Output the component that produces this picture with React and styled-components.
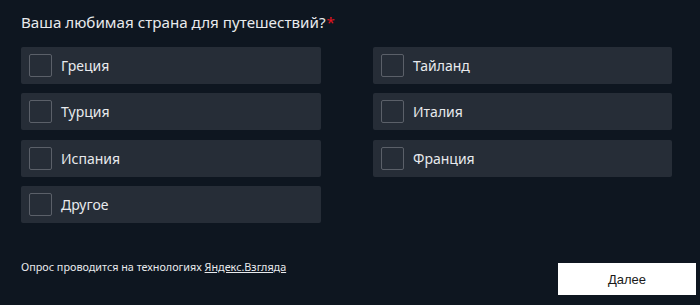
import styled, { createGlobalStyle } from "styled-components";

const Global = createGlobalStyle`
  html, body {
    margin: 0;
    background: #0e1620;
  }
  body {
    font-family: "Noto Sans", "Open Sans", sans-serif;
  }
`;

const Page = styled.div`
  width: 700px;
  height: 305px;
  box-sizing: border-box;
  padding: 11px 4px 10px 21px;
  display: flex;
  flex-direction: column;
  color: #e8eaed;
`;

const Question = styled.div`
  font-size: 15.2px;
  line-height: 22px;
  margin-bottom: 14px;
`;

const Required = styled.span`
  color: #e0141e;
  margin-left: 1px;
`;

const Options = styled.div`
  display: grid;
  grid-template-columns: 300px 299px;
  column-gap: 52px;
  row-gap: 9.3px;
  grid-auto-flow: column;
  grid-template-rows: repeat(4, 37px);
`;

const Option = styled.label`
  display: flex;
  align-items: center;
  gap: 9px;
  padding-left: 8px;
  background: #262d37;
  border-radius: 2px;
  font-size: 14px;
  cursor: pointer;
`;

const Box = styled.span`
  width: 21px;
  height: 21px;
  border: 1px solid #5b6069;
  border-radius: 2px;
  box-sizing: content-box;
`;

const Footer = styled.div`
  margin-top: auto;
  display: flex;
  justify-content: space-between;
  align-items: flex-end;
`;

const Credit = styled.div`
  font-size: 10.8px;
  margin-bottom: 21px;
  color: #e8eaed;

  a {
    color: inherit;
    text-decoration: underline;
  }
`;

const Next = styled.button`
  width: 138px;
  height: 32px;
  border: none;
  background: #ffffff;
  color: #1a1a1a;
  font-family: "Liberation Sans", Arial, sans-serif;
  font-size: 13px;
  cursor: pointer;
`;

const left = ["Греция", "Турция", "Испания", "Другое"];
const right = ["Тайланд", "Италия", "Франция"];

export default function App() {
  return (
    <Page>
      <Global />
      <Question>
        Ваша любимая страна для путешествий?<Required>*</Required>
      </Question>
      <Options>
        {left.map((t) => (
          <Option key={t}>
            <Box />
            {t}
          </Option>
        ))}
        {right.map((t) => (
          <Option key={t}>
            <Box />
            {t}
          </Option>
        ))}
      </Options>
      <Footer>
        <Credit>
          Опрос проводится на технологиях <a href="#">Яндекс.Взгляда</a>
        </Credit>
        <Next>Далее</Next>
      </Footer>
    </Page>
  );
}
